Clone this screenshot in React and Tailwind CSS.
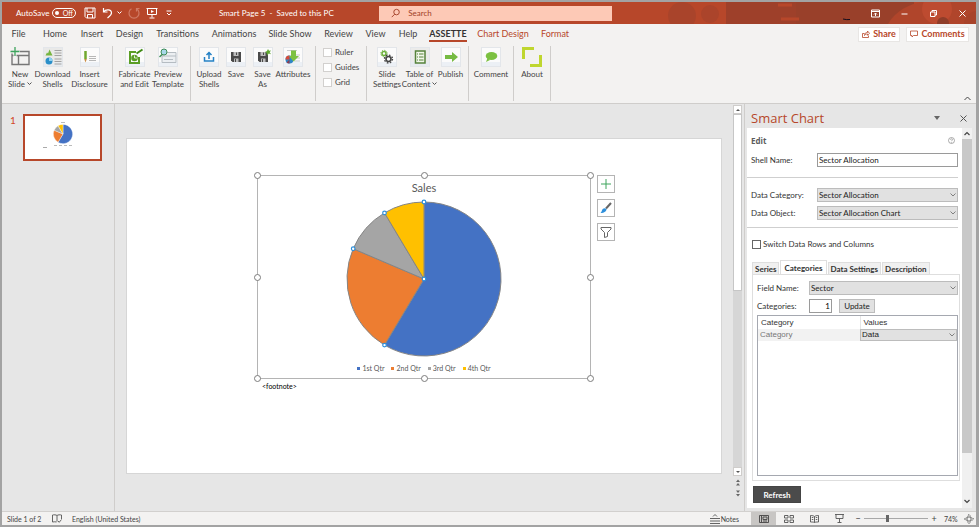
import React, { useState } from "react";

const RIBBON_TABS = [
  { label: "File", width: "w-[33px]" },
  { label: "Home", width: "w-[40px]" },
  { label: "Insert", width: "w-[34px]" },
  { label: "Design", width: "w-[41px]" },
  { label: "Transitions", width: "w-[55px]" },
  { label: "Animations", width: "w-[58px]" },
  { label: "Slide Show", width: "w-[54px]" },
  { label: "Review", width: "w-[43px]" },
  { label: "View", width: "w-[31px]" },
  { label: "Help", width: "w-[34px]" },
  { label: "ASSETTE", width: "w-[46px]", active: true },
  { label: "Chart Design", width: "w-[64px]", context: true },
  { label: "Format", width: "w-[40px]", context: true },
];

const QUARTERS = [
  { label: "1st Qtr", value: 8.2, color: "#4472c4" },
  { label: "2nd Qtr", value: 3.2, color: "#ed7d31" },
  { label: "3rd Qtr", value: 1.4, color: "#a5a5a5" },
  { label: "4th Qtr", value: 1.2, color: "#ffc000" },
];

const PANEL_TABS = ["Series", "Categories", "Data Settings", "Description"];

const App = () => (
  <div className="flex h-screen min-h-[520px] flex-col border-2 border-r-[3px] border-[#a3a3a3] bg-[#e6e6e6] font-['Lato','Open_Sans',sans-serif] text-[8px] leading-[10px] text-[#444]">
    <TitleBar />
    <RibbonTabs />
    <Ribbon />
    <main className="flex min-h-0 flex-1">
      <Thumbnails />
      <Canvas />
      <SmartChartPanel />
    </main>
    <StatusBar />
  </div>
);

/* ---------- title bar ---------- */

const TitleBar = () => (
  <header className="relative flex h-[22px] shrink-0 items-center bg-[#b7472a] text-[8px] text-white">
    <svg
      className="absolute right-0 top-0 h-full w-[350px]"
      viewBox="0 0 350 22"
      preserveAspectRatio="xMaxYMid slice"
    >
      <rect x="100" width="72" height="22" fill="#9e402a" />
      <rect x="170" width="118" height="22" fill="#99402a" />
      <circle cx="56" cy="14" r="14" fill="#a9442b" />
      <circle cx="84" cy="12" r="9" fill="#ab442b" />
      <path d="M152 3h14M155 17h18" stroke="#b7472a" strokeWidth="3" />
      <path d="M262 22c8-14 22-20 34-22h54v22z" fill="#b0452b" />
      <circle cx="311" cy="7" r="15" fill="#bd4b30" />
      <circle cx="317" cy="21" r="6" fill="#8f3d29" />
      <path d="M338 22c0-7 5-12 12-13v13z" fill="#a8432a" />
      <path d="M217 17q4 1 7 .500" stroke="#140c1c" fill="none" />
    </svg>
    <div className="relative flex w-[217px] items-center pl-[14px]">
      <span className="w-[36px] whitespace-nowrap">AutoSave</span>
      <button className="flex h-[10px] w-[24px] items-center justify-between rounded-full border border-white px-[2px] text-[7px] leading-none">
        <span className="size-[4px] rounded-full bg-white" />
        Off
      </button>
      <button title="Save" className="ml-[8px]">
        <svg width="12" height="12" viewBox="0 0 12 12" fill="none" stroke="white">
          <path d="M1 1h10v10H2.500L1 9.500zM3 1v4h6V1M3.500 11V7.500h5V11" />
        </svg>
      </button>
      <button title="Undo" className="ml-[6px]">
        <svg width="11" height="12" viewBox="0 0 11 12" fill="none" stroke="white" strokeWidth="1.200">
          <path d="M1.500 1v4h4M1.500 5C3.500 2 9.500 2 9.500 6c0 2-1.500 3-4 5" />
        </svg>
      </button>
      <svg className="ml-[4px]" width="5" height="4" viewBox="0 0 5 4" fill="none" stroke="white">
        <path d="M.5.500l2 2 2-2" />
      </svg>
      <button title="Redo" className="ml-[6px]">
        <svg width="12" height="12" viewBox="0 0 12 12" fill="none" stroke="#cf7a64" strokeWidth="1.200">
          <path d="M3.500 1.800A5 5 0 1 0 8.500 1.800M8.500 4.500V1.500h3" />
        </svg>
      </button>
      <button title="Present" className="ml-[6px]">
        <svg width="12" height="12" viewBox="0 0 12 12" fill="none" stroke="white">
          <path d="M.5 1.500h11M1.500 1.500v6h9v-6M6 7.500v3M3.500 11h5" />
          <path d="M5 3l3 1.500L5 6z" fill="white" stroke="none" />
        </svg>
      </button>
      <svg className="ml-[8px]" width="6" height="6" viewBox="0 0 6 6" fill="none" stroke="white">
        <path d="M.5 1h5M1 3l2 2 2-2" />
      </svg>
    </div>
    <h1 className="relative w-[160px] whitespace-pre">Smart Page 5  -  Saved to this PC</h1>
    <label className="relative flex h-[15px] w-[233px] items-center gap-[8px] bg-[#fdc9b6] pl-[12px]">
      <svg width="10" height="10" viewBox="0 0 10 10" fill="none" stroke="#a23f27">
        <circle cx="6" cy="4" r="3" />
        <path d="M4 6.300L.8 9.500" />
      </svg>
      <input
        aria-label="Search"
        placeholder="Search"
        className="w-full bg-transparent outline-none placeholder:text-[#a23f27]"
      />
    </label>
    <div className="relative ml-auto flex items-center gap-[20px] pr-[9px]">
      <button title="Ribbon display options">
        <svg width="9" height="9" viewBox="0 0 9 9" fill="none" stroke="white">
          <path d="M.5 1h8v7h-8zM.5 2.500h8M4.500 7V4M3 5.500L4.500 4 6 5.500" />
        </svg>
      </button>
      <button title="Minimize">
        <svg width="9" height="9" viewBox="0 0 9 9" stroke="white">
          <path d="M1.500 5h6" />
        </svg>
      </button>
      <button title="Restore">
        <svg width="9" height="9" viewBox="0 0 9 9" fill="none" stroke="white">
          <path d="M1.500 3h4.500v4.500H1.500zM3 3V1.500h4.500V6H6" />
        </svg>
      </button>
      <button title="Close">
        <svg width="9" height="9" viewBox="0 0 9 9" stroke="white">
          <path d="M1.500 1.500l6 6M7.500 1.500l-6 6" />
        </svg>
      </button>
    </div>
  </header>
);

/* ---------- ribbon ---------- */

const tabColor = (tab) => {
  if (tab.active) return "font-bold text-[#333]";
  return tab.context ? "text-[#b7472a]" : "text-[#444]";
};

const RibbonTabs = () => (
  <nav className="flex h-[20px] shrink-0 items-center bg-[#f3f2f1] text-[9px]">
    {RIBBON_TABS.map((tab) => (
      <div key={tab.label} className={`flex h-full shrink-0 justify-center ${tab.width}`}>
        <button
          className={`h-[18px] whitespace-nowrap border-b-2 pt-[3px] ${tab.active ? "border-[#b7472a]" : "border-transparent"} ${tabColor(tab)}`}
        >
          {tab.label}
        </button>
      </div>
    ))}
    <div className="ml-auto flex gap-[6px] pr-[7px] font-bold text-[#b7472a]">
      <button className="flex h-[15px] w-[42px] items-center justify-center gap-[3px] border border-[#e8e6e4] bg-white">
        <svg width="8" height="8" viewBox="0 0 8 8" fill="none" stroke="#b7472a" strokeWidth=".8">
          <path d="M2.500 3.500h-2v4h6v-2M2.500 5.500c0-2 1-3 3-3V1l2 2.300-2 2V4c-1.500 0-2.500.500-3 1.500z" />
        </svg>
        Share
      </button>
      <button className="flex h-[15px] w-[63px] items-center justify-center gap-[3px] border border-[#e8e6e4] bg-white">
        <svg width="8" height="8" viewBox="0 0 8 8" fill="none" stroke="#b7472a" strokeWidth=".8">
          <path d="M.5 1h7v4.500H3.500L2 7V5.500H.5z" />
        </svg>
        Comments
      </button>
    </div>
  </nav>
);

const Ribbon = () => (
  <section className="flex h-[60px] shrink-0 border-b border-[#cfcdcb] bg-[#f3f2f1] pb-[2px] pt-[2px]">
    <Group className="pl-[3px] pr-[3px]">
      <Tool width="w-[30px]" label="New" second="Slide" drop icon={<NewSlideIcon />} />
      <Tool width="w-[35px]" label="Download" second="Shells" icon={<DownloadIcon />} />
      <Tool width="w-[39px]" label="Insert" second="Disclosure" icon={<DisclosureIcon />} />
    </Group>
    <Group className="pl-[4px] pr-[6px]">
      <Tool width="w-[35px]" label="Fabricate" second="and Edit" icon={<FabricateIcon />} />
      <Tool width="w-[32px]" label="Preview" second="Template" icon={<PreviewIcon />} />
    </Group>
    <Group className="pl-[5px] pr-[4px]">
      <Tool width="w-[26px]" label="Upload" second="Shells" icon={<UploadIcon />} />
      <Tool width="w-[28px]" label="Save" icon={<SaveIcon />} />
      <Tool width="w-[25px]" label="Save" second="As" icon={<SaveIcon star />} />
      <Tool width="w-[36px]" label="Attributes" icon={<AttributesIcon />} />
    </Group>
    <Group className="w-[51px] pl-[7px]">
      <div className="flex flex-col gap-[5px] pt-[1px]">
        {["Ruler", "Guides", "Grid"].map((name) => (
          <label key={name} className="flex items-center gap-[3px]">
            <input
              type="checkbox"
              className="size-[9px] appearance-none border border-[#d2d0ce] bg-white checked:bg-[#b7472a]"
            />
            {name}
          </label>
        ))}
      </div>
    </Group>
    <Group className="pl-[6px] pr-[5px]">
      <Tool width="w-[28px]" label="Slide" second="Settings" icon={<SettingsIcon />} />
      <Tool width="w-[37px]" label="Table of" second="Content" drop icon={<ContentsIcon />} />
      <Tool width="w-[25px]" label="Publish" icon={<PublishIcon />} />
    </Group>
    <Group className="px-[4px]">
      <Tool width="w-[36px]" label="Comment" icon={<CommentIcon />} />
    </Group>
    <Group className="px-[4px]">
      <Tool width="w-[28px]" label="About" icon={<AboutIcon />} />
    </Group>
    <button title="Collapse the ribbon" className="ml-auto self-end pr-[5px]">
      <svg width="7" height="5" viewBox="0 0 7 5" fill="none" stroke="#444">
        <path d="M.5 4l3-3 3 3" />
      </svg>
    </button>
  </section>
);

const Group = ({ className, children }) => (
  <div className={`flex shrink-0 border-r border-[#cfcdcb] ${className}`}>{children}</div>
);

const Tool = ({ label, second, icon, width, drop }) => (
  <button className={`flex shrink-0 flex-col items-center whitespace-nowrap pt-[1px] ${width}`}>
    <span className="mb-[2px] flex h-[20px] items-center justify-center">{icon}</span>
    <span>{label}</span>
    {second && (
      <span className="flex items-center gap-[2px]">
        {second}
        {drop && (
          <svg width="5" height="4" viewBox="0 0 5 4" fill="none" stroke="#555">
            <path d="M.5.500l2 2 2-2" />
          </svg>
        )}
      </span>
    )}
  </button>
);

const Tile = ({ children, fill = "#fbfbfb" }) => (
  <svg width="20" height="20" viewBox="0 0 20 20" fill="none">
    <rect x=".5" y=".5" width="19" height="19" fill={fill} stroke="#e3e6ea" />
    <path d="M1 15h18v4H1z" fill="#e6ebf2" opacity=".7" />
    {children}
  </svg>
);

const NewSlideIcon = () => (
  <svg width="20" height="20" viewBox="0 0 20 20" fill="none" stroke="#777">
    <path d="M2 4.500h17v13H2zM2 8.500h17M8.500 8.500v9" strokeWidth="1.400" />
    <path d="M5 0v10M0 5h10" stroke="#f3f2f1" strokeWidth="3" />
    <path d="M5 0v9M.5 4.500h9" stroke="#3da35d" strokeWidth="1.300" />
  </svg>
);

const DownloadIcon = () => (
  <Tile fill="#e9e9e8">
    <path d="M2.500 8.500L4 5.500l1 1 1.500-4 1.500 3 1.500 3z" fill="#76b53f" />
    <path d="M11.500 3.500h7M11.500 6h7M11.500 8.500h7M11.500 12h7M11.500 14.500h7M11.500 17h7" stroke="#a2a2a2" />
    <circle cx="6" cy="14" r="3.500" fill="#2a8fc9" />
    <path d="M6 14V10.500a3.500 3.500 0 0 1 3.500 3.500z" fill="#8fd0ee" />
  </Tile>
);

const DisclosureIcon = () => (
  <Tile>
    <path d="M5.500 4v8" stroke="#71a82f" strokeWidth="2.500" />
    <path d="M4.200 12h2.600L5.500 15.500z" fill="#c98d45" />
    <path d="M9 9.500h7M9 11.500h7M9 13.500h7" stroke="#b7b7b7" />
  </Tile>
);

const FabricateIcon = () => (
  <Tile>
    <path d="M14 10v6H5V5h6" stroke="#5a9e24" strokeWidth="2" />
    <circle cx="9.500" cy="11" r="3.300" fill="#5a9e24" />
    <path d="M9.500 11V8.500M9.500 11h2.500" stroke="white" strokeWidth=".8" />
    <path d="M11.500 6.500l6-4" stroke="#3f8a14" strokeWidth="2" />
  </Tile>
);

const PreviewIcon = () => (
  <Tile>
    <path d="M4 5.500h14v10H4z" fill="#eceff2" stroke="#b5bcc2" />
    <path d="M4 9h14M6 12.500h9" stroke="#b5bcc2" />
    <circle cx="6" cy="5" r="3" fill="#a8d8ea" stroke="#3f8d58" />
    <path d="M4 7.500L1.500 10" stroke="#3f8d58" strokeWidth="1.500" />
  </Tile>
);

const UploadIcon = () => (
  <Tile>
    <path d="M5.500 10v4h9v-4M10 12V5.500M7.500 8L10 5.500 12.500 8" stroke="#2481c5" strokeWidth="1.500" />
  </Tile>
);

const SaveIcon = ({ star }) => (
  <Tile>
    <path d="M5 5h10v10H6.500L5 13.500z" fill="#4a4a4a" />
    <path d="M7.500 5v4h5V5zM8 11.500h4.500V15H8z" fill="#bdbdbd" />
    <path d="M10.500 5.500v2.500M9.500 12v3" stroke="#4a4a4a" />
    {star && (
      <path d="M15 2l1 1.800 2-.200-1.300 1.600L18 7.200l-2.200-.600L14 8.500l-.200-2.500-1.800-1 2-1z" fill="#5fa832" />
    )}
  </Tile>
);

const AttributesIcon = () => (
  <Tile>
    <path d="M4 3.500h10M11 8h6M11 11h6M11 14h6" stroke="#c6c9cc" />
    <circle cx="6.500" cy="12.500" r="4" fill="#2f86c5" />
    <path d="M6.500 12.500V8.500a4 4 0 0 0-4 4z" fill="#d74b3a" />
    <path d="M6.500 12.500l-3 3a4 4 0 0 0 3 1z" fill="#8b3d52" />
    <path d="M8 3.500h5V9h3l-5.500 5.500L6 9h2z" fill="#7cc142" />
  </Tile>
);

const SettingsIcon = () => (
  <Tile>
    <circle cx="7" cy="6.500" r="2" stroke="#6bb03a" strokeWidth="1.500" />
    <circle cx="7" cy="6.500" r="3.200" stroke="#6bb03a" strokeDasharray="1.200 1.300" />
    <circle cx="11.500" cy="12" r="2.500" stroke="#444" strokeWidth="1.600" />
    <circle cx="11.500" cy="12" r="4" stroke="#444" strokeWidth="1.300" strokeDasharray="1.600 1.540" />
  </Tile>
);

const ContentsIcon = () => (
  <Tile fill="#ebebea">
    <path d="M5.500 4h9.500v12H5.500z" fill="#f1f7ea" stroke="#55823b" strokeWidth="1.500" />
    <path d="M9 7h4.500M9 10h4.500M9 13h4.500M7 7h1M7 10h1M7 13h1" stroke="#55823b" />
  </Tile>
);

const PublishIcon = () => (
  <Tile>
    <path d="M4 8h7V5l6 5-6 5v-3H4z" fill="#76bb43" />
  </Tile>
);

const CommentIcon = () => (
  <Tile>
    <ellipse cx="10.500" cy="9" rx="5.800" ry="4" fill="#7cc142" />
    <path d="M6.500 11l-1.500 4 4-2z" fill="#7cc142" />
  </Tile>
);

const AboutIcon = () => (
  <svg width="20" height="20" viewBox="0 0 20 20" fill="none" stroke="#bfd62f" strokeWidth="3">
    <path d="M1.500 12V1.500H12M18.500 8v10.500H8" />
  </svg>
);

/* ---------- slides ---------- */

const pointAt = (share, r) => {
  const a = share * Math.PI * 2;
  return [Math.sin(a) * r, -Math.cos(a) * r];
};

const TOTAL = QUARTERS.reduce((sum, q) => sum + q.value, 0);

const SLICES = QUARTERS.map((q, i) => {
  const start = QUARTERS.slice(0, i).reduce((sum, p) => sum + p.value, 0) / TOTAL;
  return { ...q, start, end: start + q.value / TOTAL };
});

const Pie = ({ size, selected }) => (
  <svg width={size} height={size} viewBox="-80 -80 160 160">
    {SLICES.map((s) => {
      const [x1, y1] = pointAt(s.start, 77);
      const [x2, y2] = pointAt(s.end, 77);
      const large = s.end - s.start > 0.5 ? 1 : 0;
      return (
        <path
          key={s.label}
          d={`M0 0L${x1} ${y1}A77 77 0 ${large} 1 ${x2} ${y2}Z`}
          fill={s.color}
          stroke={selected ? "#858585" : "white"}
          strokeWidth={selected ? 1 : 3}
        />
      );
    })}
    {selected &&
      [[0, 0], ...SLICES.map((s) => pointAt(s.start, 77))].map(([x, y], i) => (
        <circle key={i} cx={x} cy={y} r="1.800" fill="white" stroke="#2e8fdb" strokeWidth="1.200" />
      ))}
  </svg>
);

const Thumbnails = () => (
  <aside className="flex w-[113px] shrink-0 items-start gap-[9px] border-r border-[#cfcdcb] pl-[8px] pt-[10px]">
    <span className="w-[4px] text-[10px] leading-[12px] text-[#d24726]">1</span>
    <button className="flex h-[47px] w-[79px] flex-col items-center border-2 border-[#b7472a] bg-white pt-[6px]">
      <span className="mb-[1px] h-[1px] w-[4px] bg-[#bbb]" />
      <Pie size={20} />
      <span className="mt-[1px] flex gap-[2px]">
        {QUARTERS.map((q) => (
          <span key={q.label} className="h-[1px] w-[3px] bg-[#bbb]" />
        ))}
      </span>
      <span className="ml-[18px] mt-[1px] h-[1px] w-[4px] self-start bg-[#aaa]" />
    </button>
  </aside>
);

const HANDLES = [
  "-left-[4px] -top-[4px]",
  "left-[163px] -top-[4px]",
  "-right-[4px] -top-[4px]",
  "-left-[4px] top-[98px]",
  "-right-[4px] top-[98px]",
  "-left-[4px] -bottom-[4px]",
  "left-[163px] -bottom-[4px]",
  "-right-[4px] -bottom-[4px]",
];

const Canvas = () => (
  <section className="flex min-w-0 flex-1">
    <div className="min-w-0 flex-1 pl-[11px] pr-[11px] pt-[34px]">
      <div className="aspect-[596/336] w-full border border-[#d6d6d6] bg-white pt-[36px]">
        <div className="mx-auto w-[334px]">
          <div className="relative flex h-[204px] flex-col items-center border border-[#b4b4b4] pt-[5px]">
            <h2 className="text-[11px] leading-[14px] text-[#595959]">Sales</h2>
            <div className="mt-[4px]">
              <Pie size={160} selected />
            </div>
            <ul className="mt-[4px] flex gap-[7px] text-[7px] leading-[10px] text-[#595959]">
              {QUARTERS.map((q) => (
                <li key={q.label} className="flex items-center gap-[2px]">
                  <span className="size-[3px]" style={{ backgroundColor: q.color }} />
                  {q.label}
                </li>
              ))}
            </ul>
            {HANDLES.map((pos) => (
              <span
                key={pos}
                className={`absolute size-[7px] rounded-full border border-[#7c7c7c] bg-white ${pos}`}
              />
            ))}
            <div className="absolute -top-px left-full ml-[7px] flex flex-col gap-[6px]">
              <ChartButton title="Chart elements">
                <path d="M6 1v10M1 6h10" stroke="#3ea55d" />
              </ChartButton>
              <ChartButton title="Chart styles">
                <path d="M11 1L6 6.500" stroke="#666" strokeWidth="2" />
                <path d="M6.500 7c0 2-2 4-6 4 1.500-1 1-3 2.500-4.200 1-.800 2.500-.800 3.500.200z" fill="#2e8fdb" />
              </ChartButton>
              <ChartButton title="Chart filters">
                <path d="M1 1.500h10v1.500L7.500 6.500v4l-3 1v-5L1 3z" stroke="#666" />
              </ChartButton>
            </div>
          </div>
          <p className="pl-[5px] pt-[2px] text-[7px] leading-[10px] text-black">&lt;footnote&gt;</p>
        </div>
      </div>
    </div>
    <div className="flex w-[12px] shrink-0 flex-col border-r border-[#cfcdcb] pb-[14px] pr-[2px] pt-[1px]">
      <ScrollButton title="Scroll up" d="M1 4l2-2 2 2z" />
      <div className="flex min-h-0 flex-1 flex-col bg-[#d6d6d6]">
        <div className="h-[177px] w-full border border-[#c6c6c6] bg-white" />
      </div>
      <ScrollButton title="Scroll down" d="M1 2l2 2 2-2z" />
      <div className="flex flex-col items-center gap-[4px] pt-[3px]">
        <svg width="6" height="7" viewBox="0 0 6 7" fill="#666">
          <path d="M1 3l2-2.500L5 3zM1 6.500L3 4l2 2.500z" />
        </svg>
        <svg width="6" height="7" viewBox="0 0 6 7" fill="#666">
          <path d="M1 .5L3 3 5 .5zM1 4l2 2.500L5 4z" />
        </svg>
      </div>
    </div>
  </section>
);

const ChartButton = ({ title, children }) => (
  <button
    title={title}
    className="flex size-[18px] items-center justify-center border border-[#b4b4b4] bg-white"
  >
    <svg width="12" height="12" viewBox="0 0 12 12" fill="none">
      {children}
    </svg>
  </button>
);

const ScrollButton = ({ title, d }) => (
  <button
    title={title}
    className="flex h-[9px] items-center justify-center border border-[#cfcdcb] bg-white"
  >
    <svg width="6" height="6" viewBox="0 0 6 6" fill="#555">
      <path d={d} />
    </svg>
  </button>
);

/* ---------- smart chart panel ---------- */

const SmartChartPanel = () => {
  const [tab, setTab] = useState("Categories");
  return (
    <aside className="flex w-[231px] shrink-0 flex-col pb-[3px] pl-[2px] pr-[4px]">
      <div className="flex h-[24px] shrink-0 items-center pl-[4px] pr-[5px] pt-[4px]">
        <h2 className="flex-1 font-['Open_Sans',sans-serif] text-[13px] leading-[16px] text-[#b7472a]">Smart Chart</h2>
        <button title="Panel options">
          <svg width="6" height="4" viewBox="0 0 6 4" fill="#666">
            <path d="M0 0h6L3 4z" />
          </svg>
        </button>
        <button title="Close panel" className="ml-[20px]">
          <svg width="7" height="7" viewBox="0 0 7 7" stroke="#555">
            <path d="M.5.500l6 6M6.500.500l-6 6" />
          </svg>
        </button>
      </div>
      <div className="flex min-h-0 flex-1 bg-white">
        <form className="flex min-w-0 flex-1 flex-col pr-[4px] text-[#333]">
          <div className="flex h-[25px] items-center justify-between pl-[4px] pr-[3px]">
            <h3 className="font-['Open_Sans',sans-serif] font-bold text-[#5c5c5c]">Edit</h3>
            <svg width="7" height="7" viewBox="0 0 7 7" fill="none" stroke="#888" strokeWidth=".7">
              <circle cx="3.500" cy="3.500" r="3" />
              <path d="M2.500 2.700c0-1.200 2-1.200 2 0 0 .700-1 .700-1 1.500M3.500 5v.700" />
            </svg>
          </div>
          <div className="flex h-[25px] items-start border-b border-[#cfcfcf] pl-[4px]">
            <label htmlFor="shell" className="w-[66px] pt-[2px]">
              Shell Name:
            </label>
            <input
              id="shell"
              defaultValue="Sector Allocation"
              className="h-[14px] min-w-0 flex-1 border border-[#9a9a9a] bg-white px-[1px] text-[#222]"
            />
          </div>
          <div className="flex h-[50px] flex-col gap-[4px] border-b border-[#cfcfcf] pl-[4px] pt-[10px]">
            <div className="flex items-center">
              <label htmlFor="category" className="w-[66px]">
                Data Category:
              </label>
              <Dropdown id="category" value="Sector Allocation" />
            </div>
            <div className="flex items-center">
              <label htmlFor="object" className="w-[66px]">
                Data Object:
              </label>
              <Dropdown id="object" value="Sector Allocation Chart" />
            </div>
          </div>
          <label className="flex h-[32px] items-center gap-[2px] pl-[5px]">
            <input
              type="checkbox"
              className="size-[9px] appearance-none border border-[#666] bg-white checked:bg-[#444]"
            />
            Switch Data Rows and Columns
          </label>
          <div className="flex h-[14px] shrink-0 items-end gap-[1px] pl-[5px] text-[8px] font-bold">
            {PANEL_TABS.map((name) => (
              <button
                key={name}
                type="button"
                onClick={() => setTab(name)}
                className={`whitespace-nowrap border border-b-0 border-[#dedede] ${tab === name ? "h-[14px] bg-white px-[3px]" : "h-[12px] bg-[#f0f0f0] px-[2px]"}`}
              >
                {name}
              </button>
            ))}
          </div>
          <div className="-mr-[2px] ml-[5px] flex min-h-0 flex-1 flex-col border border-[#dedede] p-[4px] pr-[1px] pt-[6px]">
            <div className="flex items-center">
              <label htmlFor="field" className="w-[52px]">
                Field Name:
              </label>
              <Dropdown id="field" value="Sector" />
            </div>
            <div className="mt-[4px] flex items-center">
              <label htmlFor="count" className="w-[52px]">
                Categories:
              </label>
              <input
                id="count"
                defaultValue="1"
                className="h-[14px] w-[23px] border border-[#9a9a9a] bg-white px-[1px] text-right text-black"
              />
              <button
                type="button"
                className="ml-[7px] h-[14px] w-[36px] border border-[#bcbcbc] bg-[#e1e1e1] text-[#222]"
              >
                Update
              </button>
            </div>
            <div className="mt-[2px] min-h-0 flex-1 border border-[#a5a8b0] font-['Liberation_Sans',sans-serif]">
              <table className="w-full table-fixed text-left">
                <thead>
                  <tr className="h-[13px]">
                    <th className="w-[102px] border-r border-[#e6e6e6] pl-[3px] font-normal">Category</th>
                    <th className="pl-[3px] font-normal">Values</th>
                  </tr>
                </thead>
                <tbody>
                  <tr>
                    <td className="bg-[#f2f2f2] pl-[2px] text-[#777]">Category</td>
                    <td>
                      <Dropdown id="values" value="Data" slim />
                    </td>
                  </tr>
                </tbody>
              </table>
            </div>
          </div>
          <div className="flex h-[27px] shrink-0 items-center pl-[6px]">
            <button
              type="button"
              className="h-[17px] w-[48px] border border-[#444] bg-[#4b4b4b] font-bold text-white"
            >
              Refresh
            </button>
          </div>
        </form>
        <div className="flex w-[10px] shrink-0 flex-col items-center bg-[#f0f0f0]">
          <svg className="my-[3px] shrink-0" width="6" height="5" viewBox="0 0 6 5" fill="none" stroke="#444" strokeWidth="1.200">
            <path d="M.5 4L3 1.500 5.500 4" />
          </svg>
          <div className="h-[314px] w-full bg-[#c8c8c8]" />
          <svg className="mb-[4px] mt-auto shrink-0" width="6" height="5" viewBox="0 0 6 5" fill="none" stroke="#444" strokeWidth="1.200">
            <path d="M.5 1L3 3.500 5.500 1" />
          </svg>
        </div>
      </div>
    </aside>
  );
};

const Dropdown = ({ id, value, slim }) => (
  <div className="relative min-w-0 flex-1">
    <select
      id={id}
      aria-label={slim ? "Values" : undefined}
      className={`block w-full appearance-none border border-[#bcbcbc] bg-[#e1e1e1] px-[1px] text-[#222] ${slim ? "h-[12px]" : "h-[14px]"}`}
    >
      <option>{value}</option>
    </select>
    <svg
      className="pointer-events-none absolute right-[2px] top-1/2 -translate-y-1/2"
      width="6"
      height="4"
      viewBox="0 0 6 4"
      fill="none"
      stroke="#666"
      strokeWidth=".8"
    >
      <path d="M.5.500L3 3 5.500.500" />
    </svg>
  </div>
);

/* ---------- status bar ---------- */

const StatusBar = () => (
  <footer className="flex h-[14px] shrink-0 items-center border-t border-[#d2d0ce] bg-[#f3f2f1] pl-[5px] pr-[2px] text-[7px]">
    <span className="w-[45px]">Slide 1 of 2</span>
    <svg width="10" height="9" viewBox="0 0 10 9" fill="none" stroke="#555" strokeWidth=".9">
      <path d="M5 1.500v6M5 1.500C4 .7 2 .7.500 1v7c1.500-.300 3-.300 4 0M5 1.500C6 .7 8 .7 9.500 1v4M6 7l1.200 1.300L9.500 5.500" />
    </svg>
    <span className="ml-[10px]">English (United States)</span>
    <button className="ml-auto flex items-center gap-[1px]">
      <svg width="10" height="10" viewBox="0 0 10 10" fill="none" stroke="#555" strokeWidth=".9">
        <path d="M0 4.500h10M0 7h10M0 9.500h10M3 2.500L5 .5l2 2" />
      </svg>
      Notes
    </button>
    <button title="Normal" className="ml-[12px] flex h-[13px] w-[25px] items-center justify-center bg-[#c8c6c4]">
      <svg width="10" height="8" viewBox="0 0 10 8" fill="none" stroke="#444" strokeWidth=".9">
        <path d="M.5.500h9v7h-9zM2.500.500v7M4 2h4v2.500H4zM4 6h4" />
      </svg>
    </button>
    <div className="ml-[8px] flex items-center gap-[16px]">
      <button title="Slide sorter">
        <svg width="10" height="8" viewBox="0 0 10 8" fill="none" stroke="#555" strokeWidth=".9">
          <path d="M.5.500h3.500V3H.5zM6 .5h3.500V3H6zM.5 5h3.500v2.500H.5zM6 5h3.500v2.500H6z" />
        </svg>
      </button>
      <button title="Reading view">
        <svg width="9" height="8" viewBox="0 0 9 8" fill="none" stroke="#555" strokeWidth=".9">
          <path d="M4.500 1.500v6M.5.500c2 0 3 .300 4 1 1-.700 2-1 4-1v6.500c-2 0-3 0-4 .500-1-.500-2-.500-4-.500zM1.800 2.500h1.500M1.800 4.500h1.500M5.800 2.500h1.500M5.800 4.500h1.500" />
        </svg>
      </button>
      <button title="Slide show">
        <svg width="9" height="9" viewBox="0 0 9 9" fill="none" stroke="#555" strokeWidth=".9">
          <path d="M0 .5h9M1 .5v4h7v-4M4.500 4.500v4M2.500 8.500h4" />
        </svg>
      </button>
    </div>
    <button title="Zoom out" className="ml-[11px] w-[6px] text-[9px]">
      −
    </button>
    <input
      type="range"
      aria-label="Zoom"
      defaultValue="36"
      className="mx-[3px] h-[8px] w-[64px] appearance-none bg-[linear-gradient(#a8a8a8,#a8a8a8)] bg-[length:100%_1px] bg-center bg-no-repeat [&::-webkit-slider-thumb]:h-[7px] [&::-webkit-slider-thumb]:w-[3px] [&::-webkit-slider-thumb]:appearance-none [&::-webkit-slider-thumb]:bg-[#666]"
    />
    <button title="Zoom in" className="w-[6px] text-[9px]">
      +
    </button>
    <span className="ml-[7px] w-[20px]">74%</span>
    <button title="Fit slide to window">
      <svg width="10" height="10" viewBox="0 0 10 10" fill="none" stroke="#555" strokeWidth=".9">
        <path d="M3 3h4v4H3zM3.800 1.700L5 .5l1.200 1.200M3.800 8.300L5 9.500l1.200-1.200M1.700 3.800L.5 5l1.200 1.200M8.300 3.800L9.500 5 8.300 6.200" />
      </svg>
    </button>
  </footer>
);

export default App;
